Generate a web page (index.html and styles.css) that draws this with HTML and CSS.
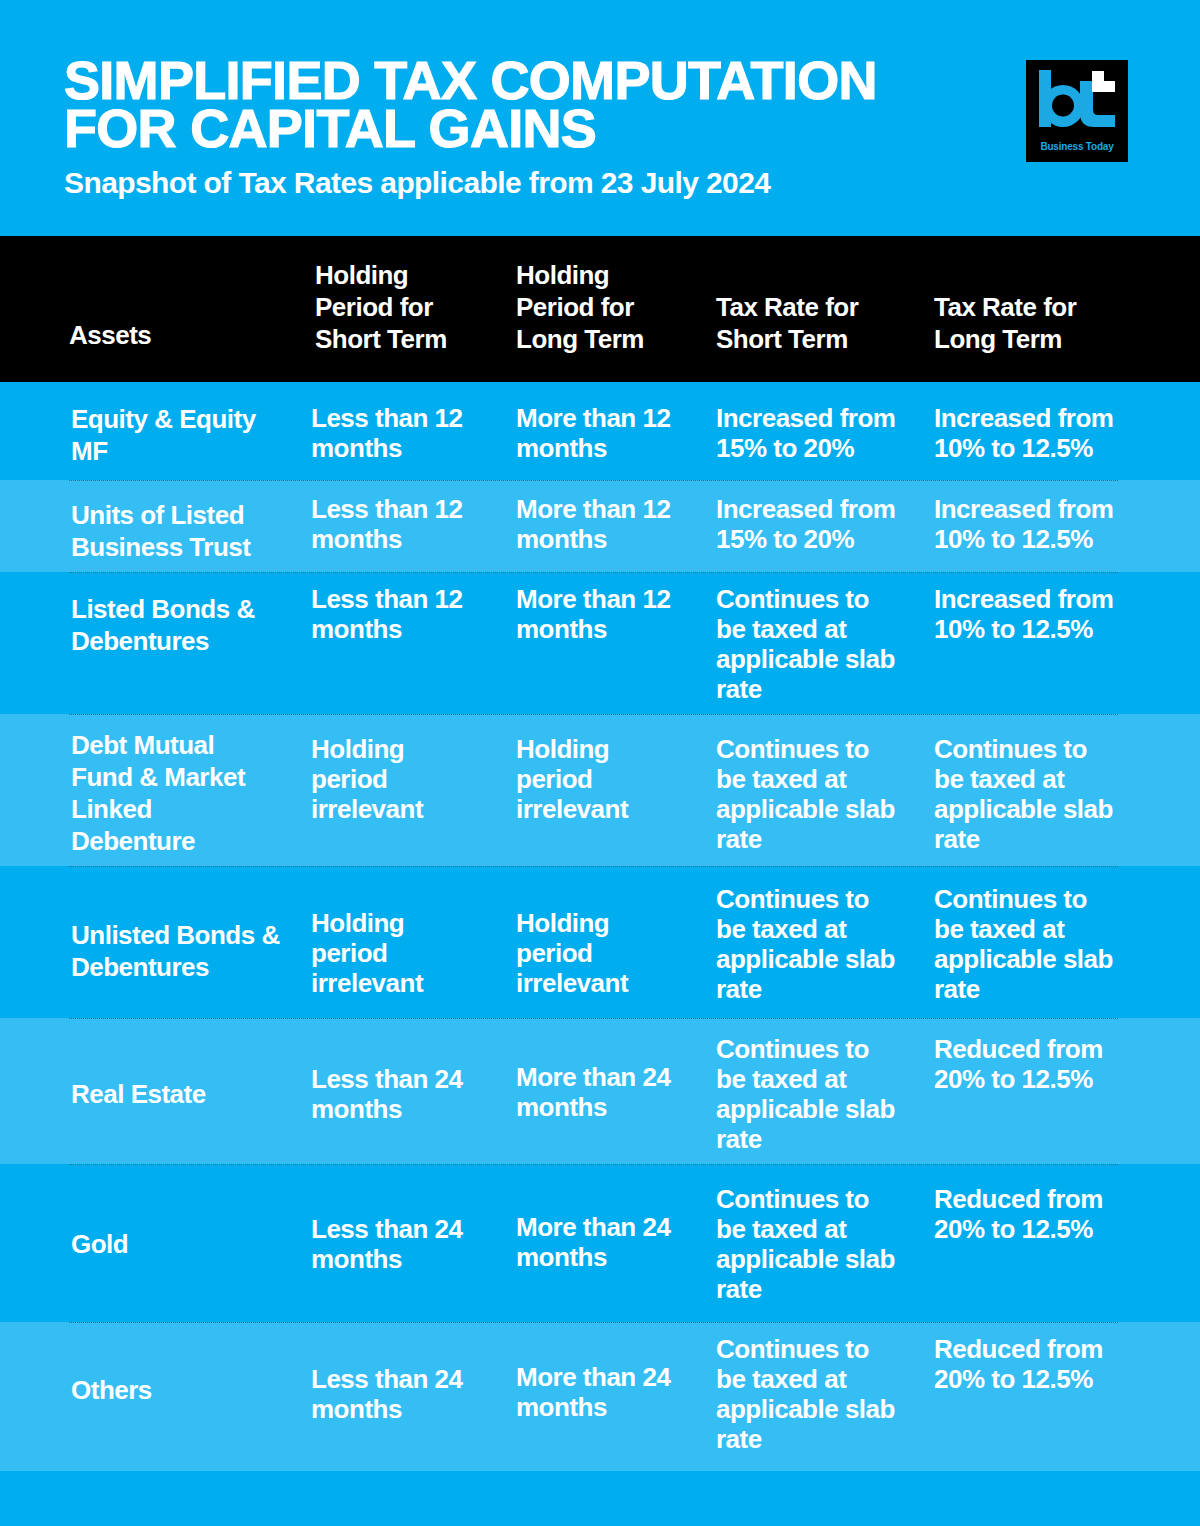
FILE: index.html
```html
<!DOCTYPE html>
<html lang="en">
<head>
<meta charset="utf-8">
<title>Simplified Tax Computation for Capital Gains</title>
<link rel="stylesheet" href="styles.css">
</head>
<body>
<div class="page">
  <header class="masthead">
    <div class="titles">
      <h1 class="title"><span class="tline">SIMPLIFIED TAX COMPUTATION</span><span class="tline">FOR CAPITAL GAINS</span></h1>
      <p class="subtitle">Snapshot of Tax Rates applicable from 23 July 2024</p>
    </div>
    <svg class="logo" width="102" height="102" viewBox="0 0 102 102" aria-label="Business Today">
      <rect x="0" y="0" width="102" height="102" fill="#000"/>
      <rect x="13" y="10" width="12" height="57" fill="#1ca8e2"/>
      <circle cx="37" cy="46" r="21" fill="#1ca8e2"/>
      <circle cx="37" cy="45.5" r="11" fill="#000"/>
      <path d="M54 21 H67 V50 Q67 55 72 55 H89 V67 H68 Q54 67 54 53 Z" fill="#1ca8e2"/>
      <rect x="66" y="11" width="12" height="11" fill="#fff"/>
      <rect x="66" y="21" width="23" height="11" fill="#fff"/>
      <text x="51" y="90" text-anchor="middle" class="logo-text">Business Today</text>
    </svg>
  </header>

  <section class="table">
    <div class="head">
      <div class="h h1">Assets</div>
      <div class="h">Holding<br>Period for<br>Short Term</div>
      <div class="h">Holding<br>Period for<br>Long Term</div>
      <div class="h">Tax Rate for<br>Short Term</div>
      <div class="h">Tax Rate for<br>Long Term</div>
    </div>

    <div class="row dark">
      <div class="grid r1">
        <div class="c c1">Equity &amp; Equity<br>MF</div>
        <div class="c">Less than 12<br>months</div>
        <div class="c">More than 12<br>months</div>
        <div class="c">Increased from<br>15% to 20%</div>
        <div class="c">Increased from<br>10% to 12.5%</div>
      </div>
    </div>

    <div class="row light">
      <div class="grid sep r2">
        <div class="c c1">Units of Listed<br>Business Trust</div>
        <div class="c">Less than 12<br>months</div>
        <div class="c">More than 12<br>months</div>
        <div class="c">Increased from<br>15% to 20%</div>
        <div class="c">Increased from<br>10% to 12.5%</div>
      </div>
    </div>

    <div class="row dark">
      <div class="grid sep r3">
        <div class="c c1">Listed Bonds &amp;<br>Debentures</div>
        <div class="c">Less than 12<br>months</div>
        <div class="c">More than 12<br>months</div>
        <div class="c">Continues to<br>be taxed at<br>applicable slab<br>rate</div>
        <div class="c">Increased from<br>10% to 12.5%</div>
      </div>
    </div>

    <div class="row light">
      <div class="grid sep r4">
        <div class="c c1">Debt Mutual<br>Fund &amp; Market<br>Linked<br>Debenture</div>
        <div class="c">Holding<br>period<br>irrelevant</div>
        <div class="c">Holding<br>period<br>irrelevant</div>
        <div class="c">Continues to<br>be taxed at<br>applicable slab<br>rate</div>
        <div class="c">Continues to<br>be taxed at<br>applicable slab<br>rate</div>
      </div>
    </div>

    <div class="row dark">
      <div class="grid sep mid r5">
        <div class="c c1">Unlisted Bonds &amp;<br>Debentures</div>
        <div class="c">Holding<br>period<br>irrelevant</div>
        <div class="c">Holding<br>period<br>irrelevant</div>
        <div class="c">Continues to<br>be taxed at<br>applicable slab<br>rate</div>
        <div class="c">Continues to<br>be taxed at<br>applicable slab<br>rate</div>
      </div>
    </div>

    <div class="row light">
      <div class="grid sep mid r6">
        <div class="c c1">Real Estate</div>
        <div class="c">Less than 24<br>months</div>
        <div class="c c3">More than 24<br>months</div>
        <div class="c">Continues to<br>be taxed at<br>applicable slab<br>rate</div>
        <div class="c atop">Reduced from<br>20% to 12.5%</div>
      </div>
    </div>

    <div class="row dark">
      <div class="grid sep mid r7">
        <div class="c c1">Gold</div>
        <div class="c">Less than 24<br>months</div>
        <div class="c c3">More than 24<br>months</div>
        <div class="c">Continues to<br>be taxed at<br>applicable slab<br>rate</div>
        <div class="c atop">Reduced from<br>20% to 12.5%</div>
      </div>
    </div>

    <div class="row light">
      <div class="grid sep mid r8">
        <div class="c c1">Others</div>
        <div class="c">Less than 24<br>months</div>
        <div class="c c3">More than 24<br>months</div>
        <div class="c">Continues to<br>be taxed at<br>applicable slab<br>rate</div>
        <div class="c atop">Reduced from<br>20% to 12.5%</div>
      </div>
    </div>
  </section>

  <div class="foot"></div>
</div>
</body>
</html>
```

FILE: styles.css
```css
* { box-sizing: border-box; }

html, body {
  margin: 0;
  padding: 0;
  background: #00aeef;
}

body {
  font-family: "Liberation Sans", Arial, sans-serif;
  color: #fff;
}

.page {
  width: 1200px;
  background: #00aeef;
}

/* ---------- masthead ---------- */
.masthead {
  display: flex;
  justify-content: space-between;
  align-items: flex-start;
  padding: 56px 72px 35px 64px;
}

.title {
  margin: 0;
  font-size: 54px;
  font-weight: 700;
  letter-spacing: -0.7px;
  -webkit-text-stroke: 1.2px #fff;
}

.tline {
  display: block;
  height: 48px;
  line-height: 48px;
  overflow: visible;
  white-space: nowrap;
}

.subtitle {
  margin: 13px 0 0 0;
  font-size: 30px;
  line-height: 36px;
  font-weight: 700;
  letter-spacing: -0.6px;
}

.logo {
  display: block;
  margin-top: 4px;
}

.logo-text {
  font-family: "Liberation Sans", Arial, sans-serif;
  font-weight: 700;
  font-size: 10px;
  letter-spacing: -0.2px;
  fill: #1ca8e2;
}

/* ---------- table ---------- */
.table {
  display: flex;
  flex-direction: column;
}

.head {
  background: #000;
  display: grid;
  grid-template-columns: 246px 201px 200px 218px 184px;
  align-items: end;
  padding: 23px 0 27px 69px;
  font-size: 26px;
  line-height: 32px;
  font-weight: 700;
  letter-spacing: -0.5px;
}

.h1 { padding-bottom: 4px; }

.row.dark { background: #00aeef; }
.row.light { background: #35bef3; }

.grid {
  margin-left: 69px;
  width: 1049px;
  display: grid;
  grid-template-columns: 242px 205px 200px 218px 184px;
  align-items: start;
  font-size: 26px;
  line-height: 30px;
  font-weight: 700;
  letter-spacing: -0.5px;
}

.grid.sep {
  border-top: 1px dotted #1b6f98;
}

.grid.mid { align-items: center; }

.c1 {
  padding-left: 2px;
  line-height: 32px;
}

.atop { align-self: start; }

.r1 { padding: 21px 0 13px; }
.r2 { padding: 13px 0 9px; }
.r2 .c1 { margin-top: 5px; }
.r3 { padding: 11px 0 10px; }
.r3 .c1 { margin-top: 9px; }
.r4 { padding: 14px 0 9px; }
.r4 .c:not(.c1) { margin-top: 5px; }
.r5 { padding: 17px 0 14px; }
.r5 .c1 { margin-top: 14px; }
.r5 .c:nth-child(2), .r5 .c:nth-child(3) { margin-top: 18px; }
.r6 { padding: 15px 0 10px; }
.r7 { padding: 19px 0 18px; }
.r8 { padding: 11px 0 17px; }
.r8 .c1 { margin-bottom: 8px; }
.c3 { margin-bottom: 4px; }

.foot {
  height: 55px;
  background: #00aeef;
}
```
